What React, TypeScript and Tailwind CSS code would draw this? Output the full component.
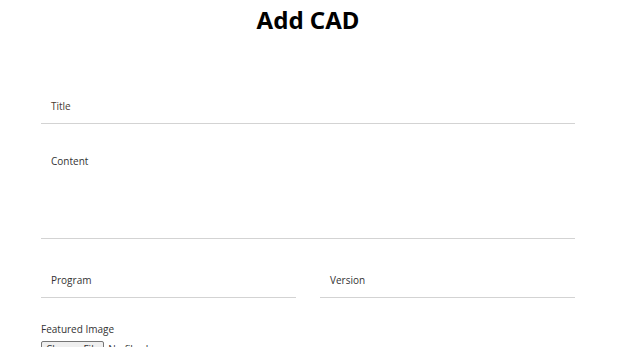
export default function App() {
  return (
    <div className="min-h-screen bg-white font-['Open_Sans',sans-serif] text-[#333]">
      <div className="ml-[41px] w-[534px]">
        <h1 className="h-[40px] text-center font-['Noto_Sans',sans-serif] text-[24px] font-bold leading-[40px] text-black">
          Add CAD
        </h1>

        {/* Title */}
        <div className="mt-[50px] border-b border-[#d3d3d3] pt-[10px] pb-[11px] pl-[10px]">
          <label className="block text-[10px] leading-[12px] text-[#4a3b30]">Title</label>
        </div>

        {/* Content */}
        <div className="h-[115px] border-b border-[#d3d3d3] pt-[31px] pl-[10px]">
          <label className="block text-[10px] leading-[12px] text-[#333]">Content</label>
        </div>

        {/* Program / Version */}
        <div className="grid grid-cols-2 gap-[24px]">
          <div className="h-[59px] border-b border-[#d3d3d3] pt-[35px] pl-[10px]">
            <label className="block text-[10px] leading-[12px] text-[#333]">Program</label>
          </div>
          <div className="h-[59px] border-b border-[#d3d3d3] pt-[35px] pl-[10px]">
            <label className="block text-[10px] leading-[12px] text-[#333]">Version</label>
          </div>
        </div>

        {/* Featured image */}
        <div className="mt-[25px]">
          <label className="block text-[10px] leading-[12px] text-[#333]">Featured Image</label>
          <input type="file" className="mt-[6px] block text-[10px] file:border file:border-[#767676] file:bg-[#efefef] file:px-[4px] file:rounded-[2px]" />
        </div>
      </div>
    </div>
  );
}
